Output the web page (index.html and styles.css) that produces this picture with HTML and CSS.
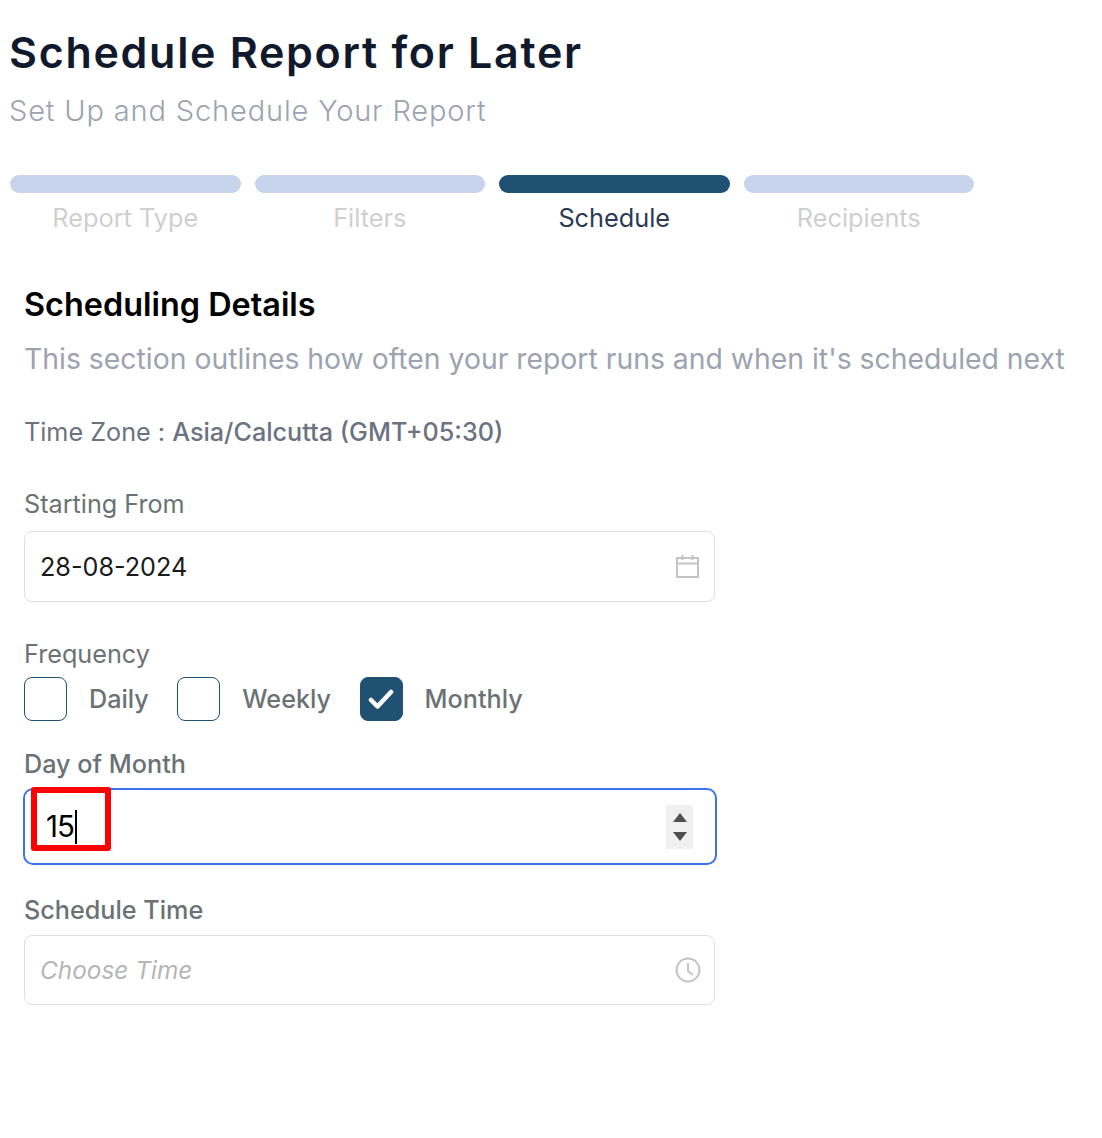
FILE: index.html
```html
<!DOCTYPE html>
<html lang="en">
<head>
    <meta charset="UTF-8">
    <meta name="viewport" content="width=device-width, initial-scale=1.0">
    <title>Schedule Report for Later</title>
    <link rel="stylesheet" href="styles.css">
</head>
<body>
    <div class="page">
        <div class="header">
            <h1>Schedule Report for Later</h1>
            <p class="subtitle">Set Up and Schedule Your Report</p>
        </div>

        <div class="steps">
            <div class="step"><div class="bar"></div><span>Report Type</span></div>
            <div class="step"><div class="bar"></div><span>Filters</span></div>
            <div class="step active"><div class="bar"></div><span>Schedule</span></div>
            <div class="step"><div class="bar"></div><span>Recipients</span></div>
        </div>

        <div class="section">
            <h2>Scheduling Details</h2>
            <p class="description">This section outlines how often your report runs and when it's scheduled next</p>
            <p class="timezone">Time Zone : <strong>Asia/Calcutta (GMT+05:30)</strong></p>

            <div class="form-group starting">
                <label>Starting From</label>
                <div class="field">
                    <span class="value">28-08-2024</span>
                    <svg class="icon calendar" width="24" height="24" viewBox="0 0 24 24" fill="none" stroke="#c4c4c4" stroke-width="2">
                        <rect x="2" y="4" width="21" height="19"/>
                        <path d="M2 9.5h21M7.5 1v5M17.5 1v5"/>
                    </svg>
                </div>
            </div>

            <div class="form-group frequency">
                <label>Frequency</label>
                <div class="options">
                    <div class="option"><div class="box"></div><span>Daily</span></div>
                    <div class="option"><div class="box"></div><span>Weekly</span></div>
                    <div class="option">
                        <div class="box checked">
                            <svg width="26" height="22" viewBox="0 0 26 22" fill="none" stroke="#fff" stroke-width="4.5" stroke-linecap="round" stroke-linejoin="round">
                                <path d="M3 12l6.5 6.5L23 4"/>
                            </svg>
                        </div>
                        <span>Monthly</span>
                    </div>
                </div>
            </div>

            <div class="form-group day">
                <label>Day of Month</label>
                <div class="field focused">
                    <span class="value">15</span><span class="caret"></span>
                    <div class="spinner">
                        <svg width="14" height="10" viewBox="0 0 14 10"><path d="M7 0l7 9H0z" fill="#505050"/></svg>
                        <svg width="14" height="10" viewBox="0 0 14 10"><path d="M0 1h14l-7 9z" fill="#505050"/></svg>
                    </div>
                    <div class="highlight"></div>
                </div>
            </div>

            <div class="form-group time">
                <label>Schedule Time</label>
                <div class="field">
                    <span class="placeholder">Choose Time</span>
                    <svg class="icon clock" width="26" height="26" viewBox="0 0 26 26" fill="none" stroke="#c4c4c4" stroke-width="2">
                        <circle cx="13" cy="13" r="11.5"/>
                        <path d="M13 6v8l5 4"/>
                    </svg>
                </div>
            </div>
        </div>
    </div>
</body>
</html>
```

FILE: styles.css
```css
* {
    box-sizing: border-box;
}
body {
    margin: 0;
    background: white;
    font-family: Inter, sans-serif;
}
.page {
    padding: 27px 0 0 9px;
    height: 1138px;
}
h1 {
    margin: 0;
    font-size: 43px;
    line-height: 50px;
    font-weight: 600;
    color: #111a2c;
    letter-spacing: 1.7px;
}
.subtitle {
    margin: 17px 0 0;
    font-size: 29px;
    line-height: 34px;
    font-weight: 300;
    color: #9ca3af;
    letter-spacing: 0.85px;
}
.steps {
    display: grid;
    grid-template-columns: repeat(4, 1fr);
    gap: 14px;
    width: 964px;
    margin: 47px 0 0 1px;
}
.step {
    display: flex;
    flex-direction: column;
    align-items: center;
    font-size: 25.3px;
    line-height: 30px;
    color: #cfcfcf;
}
.bar {
    width: 100%;
    height: 18px;
    border-radius: 9px;
    background: #c8d4eb;
    margin-bottom: 10px;
}
.step.active {
    color: #2a3a55;
}
.step.active .bar {
    background: #205072;
}
.section {
    padding-left: 15px;
}
h2 {
    margin: 52px 0 0;
    font-size: 32.4px;
    line-height: 40px;
    font-weight: 600;
    color: black;
}
.description {
    margin: 15px 0 0;
    font-size: 28.35px;
    line-height: 38px;
    color: #9ca3af;
    white-space: nowrap;
}
.timezone {
    margin: 37px 0 0;
    font-size: 25.2px;
    line-height: 34px;
    color: #6b7280;
}
.timezone strong {
    font-weight: 500;
}
label {
    display: block;
    font-size: 25.2px;
    line-height: 32px;
    color: #6b7275;
}
.starting {
    margin-top: 39px;
}
.field {
    position: relative;
    display: flex;
    align-items: center;
    width: 691px;
    height: 71px;
    margin-top: 11px;
    padding: 0 15px;
    border: 1px solid #e0e0e0;
    border-radius: 8px;
}
.value {
    font-size: 25.2px;
    color: #1a1a1a;
}
.icon {
    margin-left: auto;
}
.calendar {
    margin-top: -2px;
}
.clock {
    margin-right: -2px;
}
.frequency {
    margin-top: 36px;
}
.options {
    display: flex;
    gap: 28.5px;
    margin-top: 7px;
}
.option {
    display: flex;
    align-items: center;
    gap: 22px;
    font-size: 25.2px;
    font-weight: 500;
    color: #6b7275;
}
.box {
    display: flex;
    align-items: center;
    justify-content: center;
    width: 43px;
    height: 44px;
    border: 1px solid #205072;
    border-radius: 8px;
}
.box.checked {
    background: #205072;
}
.day {
    margin-top: 27px;
}
.day label {
    font-weight: 500;
}
.day .field {
    left: -1px;
    width: 694px;
    height: 77px;
    margin-top: 8px;
    padding-left: 21px;
    border: 2px solid #3b72ee;
    border-radius: 10px;
}
.day .value {
    font-size: 29.5px;
    line-height: 34px;
    margin-top: -2px;
    color: black;
    letter-spacing: -1px;
}
.caret {
    width: 2px;
    height: 34px;
    margin-left: 1px;
    background: black;
}
.spinner {
    display: flex;
    flex-direction: column;
    align-items: center;
    justify-content: center;
    gap: 8px;
    width: 27px;
    height: 44px;
    margin-left: auto;
    margin-right: 7px;
    background: #f0f0f0;
}
.highlight {
    position: absolute;
    left: 6px;
    top: -3px;
    width: 80px;
    height: 64px;
    border: 6px solid #ff0000;
    border-radius: 3px;
}
.time {
    margin-top: 29px;
}
.time label {
    font-weight: 500;
}
.time .field {
    height: 70px;
    margin-top: 9px;
}
.placeholder {
    font-size: 24.4px;
    font-style: italic;
    color: #b5b5b5;
}
```
